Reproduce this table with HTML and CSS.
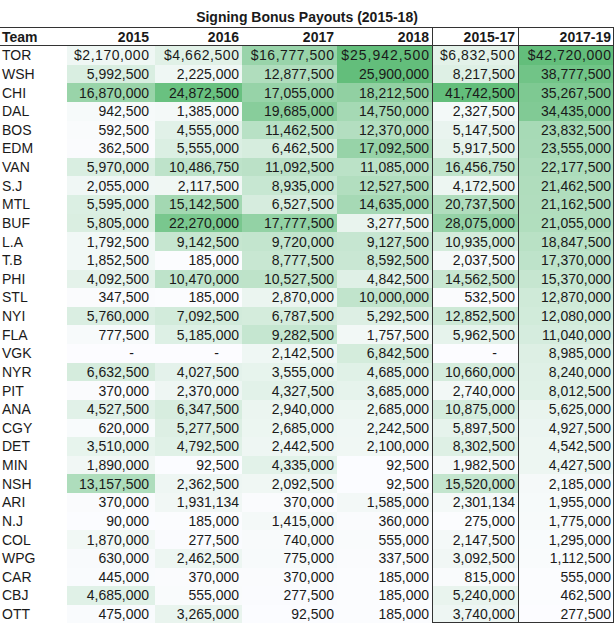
FILE: index.html
```html
<!DOCTYPE html>
<html lang="en">
<head>
<meta charset="utf-8">
<title>Signing Bonus Payouts (2015-18)</title>
<link rel="stylesheet" href="styles.css">
</head>
<body>
<div class="sheet">
  <div class="title">Signing Bonus Payouts (2015-18)</div>
  <div class="row head">
    <span class="c team">Team</span><span class="c y15">2015</span><span class="c y16">2016</span><span class="c y17">2017</span><span class="c y18">2018</span><span class="c p1517">2015-17</span><span class="c p1719">2017-19</span>
  </div>
  <div class="row first"><span class="c team">TOR</span><span class="c y15 g1"><span class="t">$2,170,000</span></span><span class="c y16 g1"><span class="t">$4,662,500</span></span><span class="c y17 g1"><span class="t">$16,777,500</span></span><span class="c y18 g1"><span class="t">$25,942,500</span></span><span class="c p1517 g2"><span class="t">$6,832,500</span></span><span class="c p1719 g3"><span class="t">$42,720,000</span></span></div>
  <div class="row"><span class="c team">WSH</span><span class="c y15 g1">5,992,500</span><span class="c y16 g1">2,225,000</span><span class="c y17 g1">12,877,500</span><span class="c y18 g1">25,900,000</span><span class="c p1517 g2">8,217,500</span><span class="c p1719 g3">38,777,500</span></div>
  <div class="row"><span class="c team">CHI</span><span class="c y15 g1">16,870,000</span><span class="c y16 g1">24,872,500</span><span class="c y17 g1">17,055,000</span><span class="c y18 g1">18,212,500</span><span class="c p1517 g2">41,742,500</span><span class="c p1719 g3">35,267,500</span></div>
  <div class="row"><span class="c team">DAL</span><span class="c y15 g1">942,500</span><span class="c y16 g1">1,385,000</span><span class="c y17 g1">19,685,000</span><span class="c y18 g1">14,750,000</span><span class="c p1517 g2">2,327,500</span><span class="c p1719 g3">34,435,000</span></div>
  <div class="row"><span class="c team">BOS</span><span class="c y15 g1">592,500</span><span class="c y16 g1">4,555,000</span><span class="c y17 g1">11,462,500</span><span class="c y18 g1">12,370,000</span><span class="c p1517 g2">5,147,500</span><span class="c p1719 g3">23,832,500</span></div>
  <div class="row"><span class="c team">EDM</span><span class="c y15 g1">362,500</span><span class="c y16 g1">5,555,000</span><span class="c y17 g1">6,462,500</span><span class="c y18 g1">17,092,500</span><span class="c p1517 g2">5,917,500</span><span class="c p1719 g3">23,555,000</span></div>
  <div class="row"><span class="c team">VAN</span><span class="c y15 g1">5,970,000</span><span class="c y16 g1">10,486,750</span><span class="c y17 g1">11,092,500</span><span class="c y18 g1">11,085,000</span><span class="c p1517 g2">16,456,750</span><span class="c p1719 g3">22,177,500</span></div>
  <div class="row"><span class="c team">S.J</span><span class="c y15 g1">2,055,000</span><span class="c y16 g1">2,117,500</span><span class="c y17 g1">8,935,000</span><span class="c y18 g1">12,527,500</span><span class="c p1517 g2">4,172,500</span><span class="c p1719 g3">21,462,500</span></div>
  <div class="row"><span class="c team">MTL</span><span class="c y15 g1">5,595,000</span><span class="c y16 g1">15,142,500</span><span class="c y17 g1">6,527,500</span><span class="c y18 g1">14,635,000</span><span class="c p1517 g2">20,737,500</span><span class="c p1719 g3">21,162,500</span></div>
  <div class="row"><span class="c team">BUF</span><span class="c y15 g1">5,805,000</span><span class="c y16 g1">22,270,000</span><span class="c y17 g1">17,777,500</span><span class="c y18 g1">3,277,500</span><span class="c p1517 g2">28,075,000</span><span class="c p1719 g3">21,055,000</span></div>
  <div class="row"><span class="c team">L.A</span><span class="c y15 g1">1,792,500</span><span class="c y16 g1">9,142,500</span><span class="c y17 g1">9,720,000</span><span class="c y18 g1">9,127,500</span><span class="c p1517 g2">10,935,000</span><span class="c p1719 g3">18,847,500</span></div>
  <div class="row"><span class="c team">T.B</span><span class="c y15 g1">1,852,500</span><span class="c y16 g1">185,000</span><span class="c y17 g1">8,777,500</span><span class="c y18 g1">8,592,500</span><span class="c p1517 g2">2,037,500</span><span class="c p1719 g3">17,370,000</span></div>
  <div class="row"><span class="c team">PHI</span><span class="c y15 g1">4,092,500</span><span class="c y16 g1">10,470,000</span><span class="c y17 g1">10,527,500</span><span class="c y18 g1">4,842,500</span><span class="c p1517 g2">14,562,500</span><span class="c p1719 g3">15,370,000</span></div>
  <div class="row"><span class="c team">STL</span><span class="c y15 g1">347,500</span><span class="c y16 g1">185,000</span><span class="c y17 g1">2,870,000</span><span class="c y18 g1">10,000,000</span><span class="c p1517 g2">532,500</span><span class="c p1719 g3">12,870,000</span></div>
  <div class="row"><span class="c team">NYI</span><span class="c y15 g1">5,760,000</span><span class="c y16 g1">7,092,500</span><span class="c y17 g1">6,787,500</span><span class="c y18 g1">5,292,500</span><span class="c p1517 g2">12,852,500</span><span class="c p1719 g3">12,080,000</span></div>
  <div class="row"><span class="c team">FLA</span><span class="c y15 g1">777,500</span><span class="c y16 g1">5,185,000</span><span class="c y17 g1">9,282,500</span><span class="c y18 g1">1,757,500</span><span class="c p1517 g2">5,962,500</span><span class="c p1719 g3">11,040,000</span></div>
  <div class="row"><span class="c team">VGK</span><span class="c y15 g1"><span class="dash">-</span></span><span class="c y16 g1"><span class="dash">-</span></span><span class="c y17 g1">2,142,500</span><span class="c y18 g1">6,842,500</span><span class="c p1517 g2"><span class="dash">-</span></span><span class="c p1719 g3">8,985,000</span></div>
  <div class="row"><span class="c team">NYR</span><span class="c y15 g1">6,632,500</span><span class="c y16 g1">4,027,500</span><span class="c y17 g1">3,555,000</span><span class="c y18 g1">4,685,000</span><span class="c p1517 g2">10,660,000</span><span class="c p1719 g3">8,240,000</span></div>
  <div class="row"><span class="c team">PIT</span><span class="c y15 g1">370,000</span><span class="c y16 g1">2,370,000</span><span class="c y17 g1">4,327,500</span><span class="c y18 g1">3,685,000</span><span class="c p1517 g2">2,740,000</span><span class="c p1719 g3">8,012,500</span></div>
  <div class="row"><span class="c team">ANA</span><span class="c y15 g1">4,527,500</span><span class="c y16 g1">6,347,500</span><span class="c y17 g1">2,940,000</span><span class="c y18 g1">2,685,000</span><span class="c p1517 g2">10,875,000</span><span class="c p1719 g3">5,625,000</span></div>
  <div class="row"><span class="c team">CGY</span><span class="c y15 g1">620,000</span><span class="c y16 g1">5,277,500</span><span class="c y17 g1">2,685,000</span><span class="c y18 g1">2,242,500</span><span class="c p1517 g2">5,897,500</span><span class="c p1719 g3">4,927,500</span></div>
  <div class="row"><span class="c team">DET</span><span class="c y15 g1">3,510,000</span><span class="c y16 g1">4,792,500</span><span class="c y17 g1">2,442,500</span><span class="c y18 g1">2,100,000</span><span class="c p1517 g2">8,302,500</span><span class="c p1719 g3">4,542,500</span></div>
  <div class="row"><span class="c team">MIN</span><span class="c y15 g1">1,890,000</span><span class="c y16 g1">92,500</span><span class="c y17 g1">4,335,000</span><span class="c y18 g1">92,500</span><span class="c p1517 g2">1,982,500</span><span class="c p1719 g3">4,427,500</span></div>
  <div class="row"><span class="c team">NSH</span><span class="c y15 g1">13,157,500</span><span class="c y16 g1">2,362,500</span><span class="c y17 g1">2,092,500</span><span class="c y18 g1">92,500</span><span class="c p1517 g2">15,520,000</span><span class="c p1719 g3">2,185,000</span></div>
  <div class="row"><span class="c team">ARI</span><span class="c y15 g1">370,000</span><span class="c y16 g1">1,931,134</span><span class="c y17 g1">370,000</span><span class="c y18 g1">1,585,000</span><span class="c p1517 g2">2,301,134</span><span class="c p1719 g3">1,955,000</span></div>
  <div class="row"><span class="c team">N.J</span><span class="c y15 g1">90,000</span><span class="c y16 g1">185,000</span><span class="c y17 g1">1,415,000</span><span class="c y18 g1">360,000</span><span class="c p1517 g2">275,000</span><span class="c p1719 g3">1,775,000</span></div>
  <div class="row"><span class="c team">COL</span><span class="c y15 g1">1,870,000</span><span class="c y16 g1">277,500</span><span class="c y17 g1">740,000</span><span class="c y18 g1">555,000</span><span class="c p1517 g2">2,147,500</span><span class="c p1719 g3">1,295,000</span></div>
  <div class="row"><span class="c team">WPG</span><span class="c y15 g1">630,000</span><span class="c y16 g1">2,462,500</span><span class="c y17 g1">775,000</span><span class="c y18 g1">337,500</span><span class="c p1517 g2">3,092,500</span><span class="c p1719 g3">1,112,500</span></div>
  <div class="row"><span class="c team">CAR</span><span class="c y15 g1">445,000</span><span class="c y16 g1">370,000</span><span class="c y17 g1">370,000</span><span class="c y18 g1">185,000</span><span class="c p1517 g2">815,000</span><span class="c p1719 g3">555,000</span></div>
  <div class="row"><span class="c team">CBJ</span><span class="c y15 g1">4,685,000</span><span class="c y16 g1">555,000</span><span class="c y17 g1">277,500</span><span class="c y18 g1">185,000</span><span class="c p1517 g2">5,240,000</span><span class="c p1719 g3">462,500</span></div>
  <div class="row last"><span class="c team">OTT</span><span class="c y15 g1">475,000</span><span class="c y16 g1">3,265,000</span><span class="c y17 g1">92,500</span><span class="c y18 g1">185,000</span><span class="c p1517 g2">3,740,000</span><span class="c p1719 g3">277,500</span></div>
</div>
<script src="script.js"></script>
</body>
</html>
```

FILE: styles.css
```css
html, body {
  margin: 0;
  padding: 0;
  background: #ffffff;
}

.sheet {
  width: 614px;
  font-family: "Liberation Sans", Arial, sans-serif;
  font-size: 14px;
  color: #1a1a1a;
  display: flex;
  flex-direction: column;
}

.title {
  height: 27px;
  box-sizing: border-box;
  padding-top: 9px;
  line-height: 16px;
  text-align: center;
  font-weight: bold;
}

.row {
  display: grid;
  grid-template-columns: 67px 88px 87px 95px 95px 86px 96px;
  height: 18.63px;
}

.row.head {
  height: 19px;
  box-sizing: border-box;
  border-top: 1px solid #333333;
  border-bottom: 1px solid #333333;
  font-weight: bold;
}

.c {
  box-sizing: border-box;
  display: flex;
  align-items: center;
  justify-content: flex-end;
  white-space: nowrap;
  line-height: 16px;
}

.c.team {
  justify-content: flex-start;
  padding-left: 2px;
}

.y15 { padding-right: 6px; }
.y16 { padding-right: 3px; }
.y17 { padding-right: 3px; }
.y18 { padding-right: 3px; }
.p1517 {
  padding-right: 3px;
  border-left: 1px solid #333333;
}
.p1719 {
  padding-right: 2px;
  border-left: 1px solid #333333;
  border-right: 1px solid #333333;
}

.last .p1517,
.last .p1719 {
  border-bottom: 1px solid #333333;
}

.first .t { letter-spacing: 0.55px; margin-right: -0.55px; }
.first .y18 .t { letter-spacing: 1px; margin-right: -1px; }

.y15 .dash { margin-right: 15px; }
.y16 .dash { margin-right: 20px; }
.p1517 .dash { margin-right: 18px; }
```

FILE: script.js
```js
(function () {
  var low = [252, 252, 255];
  var high = [99, 190, 123];
  function value(el) {
    var s = el.textContent.replace(/[^0-9]/g, '');
    return s ? parseInt(s, 10) : 0;
  }
  ['g1', 'g2', 'g3'].forEach(function (g) {
    var cells = Array.prototype.slice.call(document.querySelectorAll('.' + g));
    var vals = cells.map(value);
    var mn = Math.min.apply(null, vals);
    var mx = Math.max.apply(null, vals);
    cells.forEach(function (c, i) {
      var t = mx > mn ? (vals[i] - mn) / (mx - mn) : 0;
      var rgb = low.map(function (w, k) { return Math.round(w + (high[k] - w) * t); });
      c.style.backgroundColor = 'rgb(' + rgb.join(',') + ')';
    });
  });
})();
```
